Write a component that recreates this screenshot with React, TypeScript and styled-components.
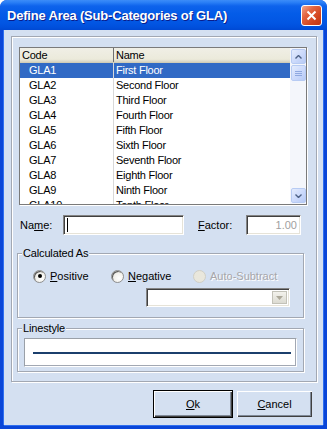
import React from "react";
import styled, { createGlobalStyle } from "styled-components";

const GlobalStyle = createGlobalStyle`
  html, body { margin: 0; padding: 0; background: #ffffff; }
  body {
    font-family: "Liberation Sans", Arial, sans-serif;
    font-size: 11px;
    color: #000;
  }
  * { box-sizing: border-box; }
`;

const FACE = "#d4e0f1";

const Window = styled.div`
  width: 327px;
  height: 429px;
  display: flex;
  flex-direction: column;
  background: #0a46d8;
  border-radius: 7px 7px 0 0;
  overflow: hidden;
`;

const TitleBar = styled.div`
  height: 30px;
  flex: none;
  display: flex;
  align-items: center;
  padding: 0 5px 0 7px;
  background: linear-gradient(
    180deg,
    #3c8cf8 0%,
    #2a7ff6 8%,
    #0e63ec 20%,
    #045ce8 45%,
    #0256e3 75%,
    #0050dd 90%,
    #0049d3 100%
  );
`;

const Title = styled.div`
  flex: 1;
  color: #fff;
  font-family: "Liberation Sans", Arial, sans-serif;
  font-weight: bold;
  font-size: 13px;
  letter-spacing: -0.2px;
  text-shadow: 1px 1px #0a1d8a;
  padding-top: 1px;
`;

const CloseButton = styled.div`
  width: 21px;
  height: 21px;
  border: 1px solid #fff;
  border-radius: 3px;
  background: linear-gradient(135deg, #f0a58c 0%, #e2633f 35%, #d2441e 70%, #c23513 100%);
  display: flex;
  align-items: center;
  justify-content: center;
  margin-top: 1px;
`;

const Client = styled.div`
  flex: 1;
  margin: 0 4px 4px 4px;
  background: ${FACE};
  padding: 6px 6px 0 7px;
  box-shadow: -1px 0 0 #2f6ff0, 1px 0 0 #2f6ff0, 0 1px 0 #2f6ff0;
  display: flex;
  flex-direction: column;
`;

const Etched = styled.div`
  border: 1px solid #a2a8b3;
  box-shadow: inset 1px 1px 0 #ffffff, 1px 1px 0 #ffffff;
`;

const OuterGroup = styled(Etched)`
  height: 346px;
  padding: 10px 9px 0 5px;
  display: flex;
  flex-direction: column;
`;

const List = styled.div`
  margin-left: 2px;
  width: 288px;
  height: 158px;
  flex: none;
  background: #fff;
  border: 1px solid #7a7a7a;
  box-shadow: 1px 1px 0 #ffffff;
  display: flex;
  overflow: hidden;
  letter-spacing: -0.25px;
`;

const ListBody = styled.div`
  flex: 1;
  display: flex;
  flex-direction: column;
  overflow: hidden;
`;

const HeaderRow = styled.div`
  height: 15px;
  flex: none;
  display: grid;
  grid-template-columns: 94px 1fr;
  background: linear-gradient(180deg, #f0efe6 0%, #ebeadb 80%, #d6d3c2 100%);
  border-bottom: 1px solid #d0cdb8;
`;

const HeaderCell = styled.div<{ $divider?: boolean }>`
  display: flex;
  align-items: center;
  padding-left: 2px;
  line-height: 14px;
  border-right: ${(p) => (p.$divider ? "1px solid #6f6f6f" : "none")};
`;

const Row = styled.div<{ $selected?: boolean }>`
  height: 15px;
  flex: none;
  display: grid;
  grid-template-columns: 94px 1fr;
  background: ${(p) => (p.$selected ? "#316ac5" : "#ffffff")};
  color: ${(p) => (p.$selected ? "#ffffff" : "#000000")};
`;

const Cell = styled.div<{ $code?: boolean }>`
  display: flex;
  align-items: center;
  padding-left: ${(p) => (p.$code ? "9px" : "2px")};
  line-height: 15px;
  white-space: nowrap;
  overflow: hidden;
  border-right: ${(p) => (p.$code ? "1px solid #d8d8d8" : "none")};
`;

const ScrollBar = styled.div`
  width: 16px;
  flex: none;
  background: #f4f6fb;
  display: flex;
  flex-direction: column;
  justify-content: space-between;
  padding: 1px 0 1px 1px;
`;

const ScrollTop = styled.div`
  display: flex;
  flex-direction: column;
  gap: 1px;
`;

const ScrollBtn = styled.div<{ $h?: number }>`
  height: ${(p) => p.$h ?? 15}px;
  width: 15px;
  border: 1px solid #b7cbf3;
  border-radius: 2px;
  background: linear-gradient(135deg, #e4ecfd 0%, #cbd9fb 55%, #b7caf5 100%);
  display: flex;
  align-items: center;
  justify-content: center;
`;

const FieldRow = styled.div`
  margin-top: 10px;
  height: 20px;
  display: flex;
  align-items: center;
  padding-left: 3px;
`;

const Label = styled.span<{ $w: number }>`
  width: ${(p) => p.$w}px;
  flex: none;
`;

const Inset = styled.div<{ $w: number; $disabled?: boolean }>`
  width: ${(p) => p.$w}px;
  height: 20px;
  flex: none;
  background: #fff;
  border-style: solid;
  border-width: 1px;
  border-color: #848484 #ffffff #ffffff #848484;
  box-shadow: inset 1px 1px 0 #404040, inset -1px -1px 0 #e6e3d8;
  display: flex;
  align-items: center;
  justify-content: flex-end;
  padding: 0 3px;
  color: ${(p) => (p.$disabled ? "#a0a0a0" : "#000")};
`;

const Caret = styled.div`
  width: 1px;
  height: 14px;
  background: #000;
  margin-right: auto;
`;

const Spacer = styled.div<{ $w: number }>`
  width: ${(p) => p.$w}px;
  flex: none;
`;

const Group = styled(Etched)<{ $h: number; $mt: number }>`
  position: relative;
  width: 287px;
  height: ${(p) => p.$h}px;
  margin-top: ${(p) => p.$mt}px;
  flex: none;
`;

const GroupCaption = styled.span`
  position: absolute;
  top: -7px;
  left: 4px;
  padding: 0 1px;
  background: ${FACE};
  line-height: 13px;
  letter-spacing: -0.15px;
`;

const RadioRow = styled.div`
  display: flex;
  align-items: center;
  padding: 15px 0 0 15px;
  height: 29px;
`;

const RadioItem = styled.label<{ $w?: number; $disabled?: boolean }>`
  display: flex;
  align-items: center;
  gap: 4px;
  width: ${(p) => (p.$w ? `${p.$w}px` : "auto")};
  color: ${(p) => (p.$disabled ? "#a7a6aa" : "#000")};
  text-shadow: ${(p) => (p.$disabled ? "1px 1px 0 #ffffff" : "none")};
`;

const RadioCircle = styled.span<{ $disabled?: boolean }>`
  width: 13px;
  height: 13px;
  border-radius: 50%;
  flex: none;
  background: ${(p) => (p.$disabled ? "#e9e7dc" : "radial-gradient(circle at 65% 65%, #ffffff 0%, #f2f1ec 50%, #d4d2c8 100%)")};
  border: 1px solid ${(p) => (p.$disabled ? "#d0cfc6" : "#8e8e8e")};
  box-shadow: ${(p) => (p.$disabled ? "none" : "inset 1px 1px 0 #5a5a5a")};
  display: flex;
  align-items: center;
  justify-content: center;
`;

const Dot = styled.span`
  width: 4px;
  height: 4px;
  border-radius: 50%;
  background: #000;
`;

const ComboRow = styled.div`
  display: flex;
  padding-left: 128px;
  margin-top: 5px;
`;

const Combo = styled.div`
  width: 144px;
  height: 19px;
  background: #fff;
  border-style: solid;
  border-width: 1px;
  border-color: #848484 #ffffff #ffffff #848484;
  box-shadow: inset 1px 1px 0 #404040, inset -1px -1px 0 #e6e3d8;
  display: flex;
  justify-content: flex-end;
  padding: 2px;
`;

const ComboBtn = styled.div`
  width: 15px;
  height: 13px;
  background: linear-gradient(180deg, #f3f2ec 0%, #dcdbd2 100%);
  border: 1px solid #c3c2b8;
  display: flex;
  align-items: center;
  justify-content: center;
`;

const LineBox = styled.div`
  margin: 9px 6px 0 6px;
  height: 29px;
  background: #fff;
  border-style: solid;
  border-width: 1px;
  border-color: #9aa0a8 #ffffff #ffffff #9aa0a8;
  box-shadow: inset -1px -1px 0 #a2a8b3;
  display: flex;
  align-items: center;
  padding: 0 5px 0 8px;
`;

const LineStroke = styled.div`
  flex: 1;
  height: 2px;
  background: #1b3f6c;
`;

const ButtonRow = styled.div`
  display: flex;
  justify-content: flex-end;
  gap: 3px;
  margin-top: 8px;
  padding-right: 4px;
`;

const Button = styled.div<{ $w: number; $default?: boolean }>`
  width: ${(p) => p.$w}px;
  height: 28px;
  background: ${FACE};
  border: 1px solid ${(p) => (p.$default ? "#000000" : "transparent")};
  box-shadow: inset 1px 1px 0 #ffffff, inset -1px -1px 0 #404040, inset -2px -2px 0 #7f8a99;
  display: flex;
  align-items: center;
  justify-content: center;
  font-size: 11px;
`;

const U = styled.span`
  text-decoration: underline;
`;

const rows: [string, string][] = [
  ["GLA1", "First Floor"],
  ["GLA2", "Second Floor"],
  ["GLA3", "Third Floor"],
  ["GLA4", "Fourth Floor"],
  ["GLA5", "Fifth Floor"],
  ["GLA6", "Sixth Floor"],
  ["GLA7", "Seventh Floor"],
  ["GLA8", "Eighth Floor"],
  ["GLA9", "Ninth Floor"],
  ["GLA10", "Tenth Floor"],
];

const Arrow = ({ down }: { down?: boolean }) => (
  <svg width="7" height="4" viewBox="0 0 7 4">
    <path
      d={down ? "M0.5 0.5 L3.5 3.5 L6.5 0.5" : "M0.5 3.5 L3.5 0.5 L6.5 3.5"}
      fill="none"
      stroke="#4d6185"
      strokeWidth="1.4"
    />
  </svg>
);

export default function App() {
  return (
    <>
      <GlobalStyle />
      <Window>
        <TitleBar>
          <Title>Define Area (Sub-Categories of GLA)</Title>
          <CloseButton>
            <svg width="11" height="11" viewBox="0 0 11 11">
              <path d="M1.5 1.5 L9.5 9.5 M9.5 1.5 L1.5 9.5" stroke="#fff" strokeWidth="2" />
            </svg>
          </CloseButton>
        </TitleBar>
        <Client>
          <OuterGroup>
            <List>
              <ListBody>
                <HeaderRow>
                  <HeaderCell $divider>Code</HeaderCell>
                  <HeaderCell>Name</HeaderCell>
                </HeaderRow>
                {rows.map(([code, name], i) => (
                  <Row key={code} $selected={i === 0}>
                    <Cell $code>{code}</Cell>
                    <Cell>{name}</Cell>
                  </Row>
                ))}
              </ListBody>
              <ScrollBar>
                <ScrollTop>
                  <ScrollBtn>
                    <Arrow />
                  </ScrollBtn>
                  <ScrollBtn $h={16}>
                    <svg width="7" height="7" viewBox="0 0 7 7">
                      <path d="M0 1.5 H7 M0 3.5 H7 M0 5.5 H7" stroke="#8fa8e0" strokeWidth="1" />
                    </svg>
                  </ScrollBtn>
                </ScrollTop>
                <ScrollBtn>
                  <Arrow down />
                </ScrollBtn>
              </ScrollBar>
            </List>

            <FieldRow>
              <Label $w={43}>
                Na<U>m</U>e:
              </Label>
              <Inset $w={121}>
                <Caret />
              </Inset>
              <Spacer $w={14} />
              <Label $w={48}>
                <U>F</U>actor:
              </Label>
              <Inset $w={55} $disabled>
                1.00
              </Inset>
            </FieldRow>

            <Group $h={65} $mt={18}>
              <GroupCaption>Calculated As</GroupCaption>
              <RadioRow>
                <RadioItem $w={78}>
                  <RadioCircle>
                    <Dot />
                  </RadioCircle>
                  <span>
                    <U>P</U>ositive
                  </span>
                </RadioItem>
                <RadioItem $w={82}>
                  <RadioCircle />
                  <span>
                    <U>N</U>egative
                  </span>
                </RadioItem>
                <RadioItem $disabled>
                  <RadioCircle $disabled />
                  <span>Auto-Subtract</span>
                </RadioItem>
              </RadioRow>
              <ComboRow>
                <Combo>
                  <ComboBtn>
                    <svg width="7" height="4" viewBox="0 0 7 4">
                      <path d="M0 0 H7 L3.5 4 Z" fill="#aca899" />
                    </svg>
                  </ComboBtn>
                </Combo>
              </ComboRow>
            </Group>

            <Group $h={44} $mt={10}>
              <GroupCaption>Linestyle</GroupCaption>
              <LineBox>
                <LineStroke />
              </LineBox>
            </Group>
          </OuterGroup>

          <ButtonRow>
            <Button $w={80} $default>
              <U>O</U>k
            </Button>
            <Button $w={77}>
              <U>C</U>ancel
            </Button>
          </ButtonRow>
        </Client>
      </Window>
    </>
  );
}
